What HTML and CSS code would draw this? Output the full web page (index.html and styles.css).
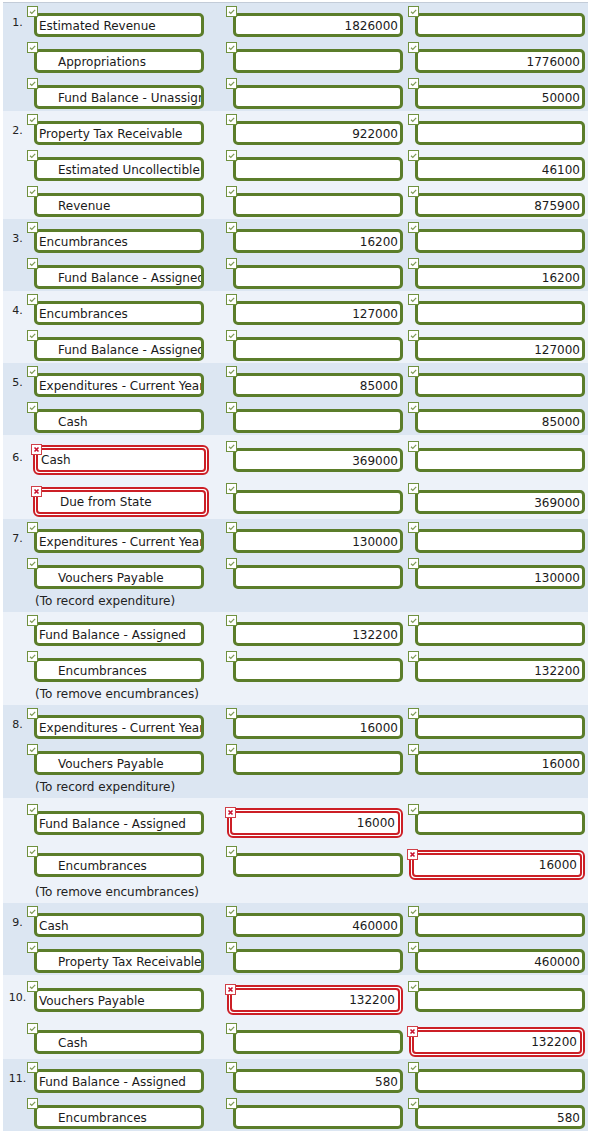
FILE: index.html
```html
<!DOCTYPE html>
<html>
<head>
<meta charset="utf-8">
<link rel="stylesheet" href="styles.css">
</head>
<body>
<div class="sheet">

<div class="grp a">
  <div class="row"><div class="num">1.</div>
    <div class="c1"><div class="fld"><svg class="chk" viewBox="0 0 11 11"><rect x=".5" y=".5" width="10" height="10" fill="#fff" stroke="#6f913f"/><path d="M3 5.8l1.8 1.7 3.4-3.6" fill="none" stroke="#7d9a55" stroke-width="1.2"/></svg><div class="box">Estimated Revenue</div></div></div>
    <div class="c2"><div class="fld"><svg class="chk" viewBox="0 0 11 11"><rect x=".5" y=".5" width="10" height="10" fill="#fff" stroke="#6f913f"/><path d="M3 5.8l1.8 1.7 3.4-3.6" fill="none" stroke="#7d9a55" stroke-width="1.2"/></svg><div class="box r">1826000</div></div></div>
    <div class="c3"><div class="fld"><svg class="chk" viewBox="0 0 11 11"><rect x=".5" y=".5" width="10" height="10" fill="#fff" stroke="#6f913f"/><path d="M3 5.8l1.8 1.7 3.4-3.6" fill="none" stroke="#7d9a55" stroke-width="1.2"/></svg><div class="box r"></div></div></div>
  </div>
  <div class="row"><div class="num"></div>
    <div class="c1"><div class="fld"><svg class="chk" viewBox="0 0 11 11"><rect x=".5" y=".5" width="10" height="10" fill="#fff" stroke="#6f913f"/><path d="M3 5.8l1.8 1.7 3.4-3.6" fill="none" stroke="#7d9a55" stroke-width="1.2"/></svg><div class="box ind">Appropriations</div></div></div>
    <div class="c2"><div class="fld"><svg class="chk" viewBox="0 0 11 11"><rect x=".5" y=".5" width="10" height="10" fill="#fff" stroke="#6f913f"/><path d="M3 5.8l1.8 1.7 3.4-3.6" fill="none" stroke="#7d9a55" stroke-width="1.2"/></svg><div class="box r"></div></div></div>
    <div class="c3"><div class="fld"><svg class="chk" viewBox="0 0 11 11"><rect x=".5" y=".5" width="10" height="10" fill="#fff" stroke="#6f913f"/><path d="M3 5.8l1.8 1.7 3.4-3.6" fill="none" stroke="#7d9a55" stroke-width="1.2"/></svg><div class="box r">1776000</div></div></div>
  </div>
  <div class="row"><div class="num"></div>
    <div class="c1"><div class="fld"><svg class="chk" viewBox="0 0 11 11"><rect x=".5" y=".5" width="10" height="10" fill="#fff" stroke="#6f913f"/><path d="M3 5.8l1.8 1.7 3.4-3.6" fill="none" stroke="#7d9a55" stroke-width="1.2"/></svg><div class="box ind">Fund Balance - Unassigned</div></div></div>
    <div class="c2"><div class="fld"><svg class="chk" viewBox="0 0 11 11"><rect x=".5" y=".5" width="10" height="10" fill="#fff" stroke="#6f913f"/><path d="M3 5.8l1.8 1.7 3.4-3.6" fill="none" stroke="#7d9a55" stroke-width="1.2"/></svg><div class="box r"></div></div></div>
    <div class="c3"><div class="fld"><svg class="chk" viewBox="0 0 11 11"><rect x=".5" y=".5" width="10" height="10" fill="#fff" stroke="#6f913f"/><path d="M3 5.8l1.8 1.7 3.4-3.6" fill="none" stroke="#7d9a55" stroke-width="1.2"/></svg><div class="box r">50000</div></div></div>
  </div>
</div>

<div class="grp b">
  <div class="row"><div class="num">2.</div>
    <div class="c1"><div class="fld"><svg class="chk" viewBox="0 0 11 11"><rect x=".5" y=".5" width="10" height="10" fill="#fff" stroke="#6f913f"/><path d="M3 5.8l1.8 1.7 3.4-3.6" fill="none" stroke="#7d9a55" stroke-width="1.2"/></svg><div class="box">Property Tax Receivable</div></div></div>
    <div class="c2"><div class="fld"><svg class="chk" viewBox="0 0 11 11"><rect x=".5" y=".5" width="10" height="10" fill="#fff" stroke="#6f913f"/><path d="M3 5.8l1.8 1.7 3.4-3.6" fill="none" stroke="#7d9a55" stroke-width="1.2"/></svg><div class="box r">922000</div></div></div>
    <div class="c3"><div class="fld"><svg class="chk" viewBox="0 0 11 11"><rect x=".5" y=".5" width="10" height="10" fill="#fff" stroke="#6f913f"/><path d="M3 5.8l1.8 1.7 3.4-3.6" fill="none" stroke="#7d9a55" stroke-width="1.2"/></svg><div class="box r"></div></div></div>
  </div>
  <div class="row"><div class="num"></div>
    <div class="c1"><div class="fld"><svg class="chk" viewBox="0 0 11 11"><rect x=".5" y=".5" width="10" height="10" fill="#fff" stroke="#6f913f"/><path d="M3 5.8l1.8 1.7 3.4-3.6" fill="none" stroke="#7d9a55" stroke-width="1.2"/></svg><div class="box ind">Estimated Uncollectible Taxes</div></div></div>
    <div class="c2"><div class="fld"><svg class="chk" viewBox="0 0 11 11"><rect x=".5" y=".5" width="10" height="10" fill="#fff" stroke="#6f913f"/><path d="M3 5.8l1.8 1.7 3.4-3.6" fill="none" stroke="#7d9a55" stroke-width="1.2"/></svg><div class="box r"></div></div></div>
    <div class="c3"><div class="fld"><svg class="chk" viewBox="0 0 11 11"><rect x=".5" y=".5" width="10" height="10" fill="#fff" stroke="#6f913f"/><path d="M3 5.8l1.8 1.7 3.4-3.6" fill="none" stroke="#7d9a55" stroke-width="1.2"/></svg><div class="box r">46100</div></div></div>
  </div>
  <div class="row"><div class="num"></div>
    <div class="c1"><div class="fld"><svg class="chk" viewBox="0 0 11 11"><rect x=".5" y=".5" width="10" height="10" fill="#fff" stroke="#6f913f"/><path d="M3 5.8l1.8 1.7 3.4-3.6" fill="none" stroke="#7d9a55" stroke-width="1.2"/></svg><div class="box ind">Revenue</div></div></div>
    <div class="c2"><div class="fld"><svg class="chk" viewBox="0 0 11 11"><rect x=".5" y=".5" width="10" height="10" fill="#fff" stroke="#6f913f"/><path d="M3 5.8l1.8 1.7 3.4-3.6" fill="none" stroke="#7d9a55" stroke-width="1.2"/></svg><div class="box r"></div></div></div>
    <div class="c3"><div class="fld"><svg class="chk" viewBox="0 0 11 11"><rect x=".5" y=".5" width="10" height="10" fill="#fff" stroke="#6f913f"/><path d="M3 5.8l1.8 1.7 3.4-3.6" fill="none" stroke="#7d9a55" stroke-width="1.2"/></svg><div class="box r">875900</div></div></div>
  </div>
</div>

<div class="grp a">
  <div class="row"><div class="num">3.</div>
    <div class="c1"><div class="fld"><svg class="chk" viewBox="0 0 11 11"><rect x=".5" y=".5" width="10" height="10" fill="#fff" stroke="#6f913f"/><path d="M3 5.8l1.8 1.7 3.4-3.6" fill="none" stroke="#7d9a55" stroke-width="1.2"/></svg><div class="box">Encumbrances</div></div></div>
    <div class="c2"><div class="fld"><svg class="chk" viewBox="0 0 11 11"><rect x=".5" y=".5" width="10" height="10" fill="#fff" stroke="#6f913f"/><path d="M3 5.8l1.8 1.7 3.4-3.6" fill="none" stroke="#7d9a55" stroke-width="1.2"/></svg><div class="box r">16200</div></div></div>
    <div class="c3"><div class="fld"><svg class="chk" viewBox="0 0 11 11"><rect x=".5" y=".5" width="10" height="10" fill="#fff" stroke="#6f913f"/><path d="M3 5.8l1.8 1.7 3.4-3.6" fill="none" stroke="#7d9a55" stroke-width="1.2"/></svg><div class="box r"></div></div></div>
  </div>
  <div class="row"><div class="num"></div>
    <div class="c1"><div class="fld"><svg class="chk" viewBox="0 0 11 11"><rect x=".5" y=".5" width="10" height="10" fill="#fff" stroke="#6f913f"/><path d="M3 5.8l1.8 1.7 3.4-3.6" fill="none" stroke="#7d9a55" stroke-width="1.2"/></svg><div class="box ind">Fund Balance - Assigned</div></div></div>
    <div class="c2"><div class="fld"><svg class="chk" viewBox="0 0 11 11"><rect x=".5" y=".5" width="10" height="10" fill="#fff" stroke="#6f913f"/><path d="M3 5.8l1.8 1.7 3.4-3.6" fill="none" stroke="#7d9a55" stroke-width="1.2"/></svg><div class="box r"></div></div></div>
    <div class="c3"><div class="fld"><svg class="chk" viewBox="0 0 11 11"><rect x=".5" y=".5" width="10" height="10" fill="#fff" stroke="#6f913f"/><path d="M3 5.8l1.8 1.7 3.4-3.6" fill="none" stroke="#7d9a55" stroke-width="1.2"/></svg><div class="box r">16200</div></div></div>
  </div>
</div>

<div class="grp b">
  <div class="row"><div class="num">4.</div>
    <div class="c1"><div class="fld"><svg class="chk" viewBox="0 0 11 11"><rect x=".5" y=".5" width="10" height="10" fill="#fff" stroke="#6f913f"/><path d="M3 5.8l1.8 1.7 3.4-3.6" fill="none" stroke="#7d9a55" stroke-width="1.2"/></svg><div class="box">Encumbrances</div></div></div>
    <div class="c2"><div class="fld"><svg class="chk" viewBox="0 0 11 11"><rect x=".5" y=".5" width="10" height="10" fill="#fff" stroke="#6f913f"/><path d="M3 5.8l1.8 1.7 3.4-3.6" fill="none" stroke="#7d9a55" stroke-width="1.2"/></svg><div class="box r">127000</div></div></div>
    <div class="c3"><div class="fld"><svg class="chk" viewBox="0 0 11 11"><rect x=".5" y=".5" width="10" height="10" fill="#fff" stroke="#6f913f"/><path d="M3 5.8l1.8 1.7 3.4-3.6" fill="none" stroke="#7d9a55" stroke-width="1.2"/></svg><div class="box r"></div></div></div>
  </div>
  <div class="row"><div class="num"></div>
    <div class="c1"><div class="fld"><svg class="chk" viewBox="0 0 11 11"><rect x=".5" y=".5" width="10" height="10" fill="#fff" stroke="#6f913f"/><path d="M3 5.8l1.8 1.7 3.4-3.6" fill="none" stroke="#7d9a55" stroke-width="1.2"/></svg><div class="box ind">Fund Balance - Assigned</div></div></div>
    <div class="c2"><div class="fld"><svg class="chk" viewBox="0 0 11 11"><rect x=".5" y=".5" width="10" height="10" fill="#fff" stroke="#6f913f"/><path d="M3 5.8l1.8 1.7 3.4-3.6" fill="none" stroke="#7d9a55" stroke-width="1.2"/></svg><div class="box r"></div></div></div>
    <div class="c3"><div class="fld"><svg class="chk" viewBox="0 0 11 11"><rect x=".5" y=".5" width="10" height="10" fill="#fff" stroke="#6f913f"/><path d="M3 5.8l1.8 1.7 3.4-3.6" fill="none" stroke="#7d9a55" stroke-width="1.2"/></svg><div class="box r">127000</div></div></div>
  </div>
</div>

<div class="grp a">
  <div class="row"><div class="num">5.</div>
    <div class="c1"><div class="fld"><svg class="chk" viewBox="0 0 11 11"><rect x=".5" y=".5" width="10" height="10" fill="#fff" stroke="#6f913f"/><path d="M3 5.8l1.8 1.7 3.4-3.6" fill="none" stroke="#7d9a55" stroke-width="1.2"/></svg><div class="box">Expenditures - Current Year</div></div></div>
    <div class="c2"><div class="fld"><svg class="chk" viewBox="0 0 11 11"><rect x=".5" y=".5" width="10" height="10" fill="#fff" stroke="#6f913f"/><path d="M3 5.8l1.8 1.7 3.4-3.6" fill="none" stroke="#7d9a55" stroke-width="1.2"/></svg><div class="box r">85000</div></div></div>
    <div class="c3"><div class="fld"><svg class="chk" viewBox="0 0 11 11"><rect x=".5" y=".5" width="10" height="10" fill="#fff" stroke="#6f913f"/><path d="M3 5.8l1.8 1.7 3.4-3.6" fill="none" stroke="#7d9a55" stroke-width="1.2"/></svg><div class="box r"></div></div></div>
  </div>
  <div class="row"><div class="num"></div>
    <div class="c1"><div class="fld"><svg class="chk" viewBox="0 0 11 11"><rect x=".5" y=".5" width="10" height="10" fill="#fff" stroke="#6f913f"/><path d="M3 5.8l1.8 1.7 3.4-3.6" fill="none" stroke="#7d9a55" stroke-width="1.2"/></svg><div class="box ind">Cash</div></div></div>
    <div class="c2"><div class="fld"><svg class="chk" viewBox="0 0 11 11"><rect x=".5" y=".5" width="10" height="10" fill="#fff" stroke="#6f913f"/><path d="M3 5.8l1.8 1.7 3.4-3.6" fill="none" stroke="#7d9a55" stroke-width="1.2"/></svg><div class="box r"></div></div></div>
    <div class="c3"><div class="fld"><svg class="chk" viewBox="0 0 11 11"><rect x=".5" y=".5" width="10" height="10" fill="#fff" stroke="#6f913f"/><path d="M3 5.8l1.8 1.7 3.4-3.6" fill="none" stroke="#7d9a55" stroke-width="1.2"/></svg><div class="box r">85000</div></div></div>
  </div>
</div>

<div class="grp b">
  <div class="row"><div class="num">6.</div>
    <div class="c1"><div class="fld bad"><svg class="chk" viewBox="0 0 11 11"><rect x=".5" y=".5" width="10" height="10" fill="#fff" stroke="#d04048"/><path d="M3.5 3.5l4 4m0-4l-4 4" stroke="#c8102e" stroke-width="1.6"/></svg><div class="box">Cash</div></div></div>
    <div class="c2"><div class="fld"><svg class="chk" viewBox="0 0 11 11"><rect x=".5" y=".5" width="10" height="10" fill="#fff" stroke="#6f913f"/><path d="M3 5.8l1.8 1.7 3.4-3.6" fill="none" stroke="#7d9a55" stroke-width="1.2"/></svg><div class="box r">369000</div></div></div>
    <div class="c3"><div class="fld"><svg class="chk" viewBox="0 0 11 11"><rect x=".5" y=".5" width="10" height="10" fill="#fff" stroke="#6f913f"/><path d="M3 5.8l1.8 1.7 3.4-3.6" fill="none" stroke="#7d9a55" stroke-width="1.2"/></svg><div class="box r"></div></div></div>
  </div>
  <div class="row"><div class="num"></div>
    <div class="c1"><div class="fld bad"><svg class="chk" viewBox="0 0 11 11"><rect x=".5" y=".5" width="10" height="10" fill="#fff" stroke="#d04048"/><path d="M3.5 3.5l4 4m0-4l-4 4" stroke="#c8102e" stroke-width="1.6"/></svg><div class="box ind">Due from State</div></div></div>
    <div class="c2"><div class="fld"><svg class="chk" viewBox="0 0 11 11"><rect x=".5" y=".5" width="10" height="10" fill="#fff" stroke="#6f913f"/><path d="M3 5.8l1.8 1.7 3.4-3.6" fill="none" stroke="#7d9a55" stroke-width="1.2"/></svg><div class="box r"></div></div></div>
    <div class="c3"><div class="fld"><svg class="chk" viewBox="0 0 11 11"><rect x=".5" y=".5" width="10" height="10" fill="#fff" stroke="#6f913f"/><path d="M3 5.8l1.8 1.7 3.4-3.6" fill="none" stroke="#7d9a55" stroke-width="1.2"/></svg><div class="box r">369000</div></div></div>
  </div>
</div>

<div class="grp a">
  <div class="row"><div class="num">7.</div>
    <div class="c1"><div class="fld"><svg class="chk" viewBox="0 0 11 11"><rect x=".5" y=".5" width="10" height="10" fill="#fff" stroke="#6f913f"/><path d="M3 5.8l1.8 1.7 3.4-3.6" fill="none" stroke="#7d9a55" stroke-width="1.2"/></svg><div class="box">Expenditures - Current Year</div></div></div>
    <div class="c2"><div class="fld"><svg class="chk" viewBox="0 0 11 11"><rect x=".5" y=".5" width="10" height="10" fill="#fff" stroke="#6f913f"/><path d="M3 5.8l1.8 1.7 3.4-3.6" fill="none" stroke="#7d9a55" stroke-width="1.2"/></svg><div class="box r">130000</div></div></div>
    <div class="c3"><div class="fld"><svg class="chk" viewBox="0 0 11 11"><rect x=".5" y=".5" width="10" height="10" fill="#fff" stroke="#6f913f"/><path d="M3 5.8l1.8 1.7 3.4-3.6" fill="none" stroke="#7d9a55" stroke-width="1.2"/></svg><div class="box r"></div></div></div>
  </div>
  <div class="row"><div class="num"></div>
    <div class="c1"><div class="fld"><svg class="chk" viewBox="0 0 11 11"><rect x=".5" y=".5" width="10" height="10" fill="#fff" stroke="#6f913f"/><path d="M3 5.8l1.8 1.7 3.4-3.6" fill="none" stroke="#7d9a55" stroke-width="1.2"/></svg><div class="box ind">Vouchers Payable</div></div></div>
    <div class="c2"><div class="fld"><svg class="chk" viewBox="0 0 11 11"><rect x=".5" y=".5" width="10" height="10" fill="#fff" stroke="#6f913f"/><path d="M3 5.8l1.8 1.7 3.4-3.6" fill="none" stroke="#7d9a55" stroke-width="1.2"/></svg><div class="box r"></div></div></div>
    <div class="c3"><div class="fld"><svg class="chk" viewBox="0 0 11 11"><rect x=".5" y=".5" width="10" height="10" fill="#fff" stroke="#6f913f"/><path d="M3 5.8l1.8 1.7 3.4-3.6" fill="none" stroke="#7d9a55" stroke-width="1.2"/></svg><div class="box r">130000</div></div></div>
  </div>
  <div class="note">(To record expenditure)</div>
</div>

<div class="grp b">
  <div class="row"><div class="num"></div>
    <div class="c1"><div class="fld"><svg class="chk" viewBox="0 0 11 11"><rect x=".5" y=".5" width="10" height="10" fill="#fff" stroke="#6f913f"/><path d="M3 5.8l1.8 1.7 3.4-3.6" fill="none" stroke="#7d9a55" stroke-width="1.2"/></svg><div class="box">Fund Balance - Assigned</div></div></div>
    <div class="c2"><div class="fld"><svg class="chk" viewBox="0 0 11 11"><rect x=".5" y=".5" width="10" height="10" fill="#fff" stroke="#6f913f"/><path d="M3 5.8l1.8 1.7 3.4-3.6" fill="none" stroke="#7d9a55" stroke-width="1.2"/></svg><div class="box r">132200</div></div></div>
    <div class="c3"><div class="fld"><svg class="chk" viewBox="0 0 11 11"><rect x=".5" y=".5" width="10" height="10" fill="#fff" stroke="#6f913f"/><path d="M3 5.8l1.8 1.7 3.4-3.6" fill="none" stroke="#7d9a55" stroke-width="1.2"/></svg><div class="box r"></div></div></div>
  </div>
  <div class="row"><div class="num"></div>
    <div class="c1"><div class="fld"><svg class="chk" viewBox="0 0 11 11"><rect x=".5" y=".5" width="10" height="10" fill="#fff" stroke="#6f913f"/><path d="M3 5.8l1.8 1.7 3.4-3.6" fill="none" stroke="#7d9a55" stroke-width="1.2"/></svg><div class="box ind">Encumbrances</div></div></div>
    <div class="c2"><div class="fld"><svg class="chk" viewBox="0 0 11 11"><rect x=".5" y=".5" width="10" height="10" fill="#fff" stroke="#6f913f"/><path d="M3 5.8l1.8 1.7 3.4-3.6" fill="none" stroke="#7d9a55" stroke-width="1.2"/></svg><div class="box r"></div></div></div>
    <div class="c3"><div class="fld"><svg class="chk" viewBox="0 0 11 11"><rect x=".5" y=".5" width="10" height="10" fill="#fff" stroke="#6f913f"/><path d="M3 5.8l1.8 1.7 3.4-3.6" fill="none" stroke="#7d9a55" stroke-width="1.2"/></svg><div class="box r">132200</div></div></div>
  </div>
  <div class="note">(To remove encumbrances)</div>
</div>

<div class="grp a">
  <div class="row"><div class="num">8.</div>
    <div class="c1"><div class="fld"><svg class="chk" viewBox="0 0 11 11"><rect x=".5" y=".5" width="10" height="10" fill="#fff" stroke="#6f913f"/><path d="M3 5.8l1.8 1.7 3.4-3.6" fill="none" stroke="#7d9a55" stroke-width="1.2"/></svg><div class="box">Expenditures - Current Year</div></div></div>
    <div class="c2"><div class="fld"><svg class="chk" viewBox="0 0 11 11"><rect x=".5" y=".5" width="10" height="10" fill="#fff" stroke="#6f913f"/><path d="M3 5.8l1.8 1.7 3.4-3.6" fill="none" stroke="#7d9a55" stroke-width="1.2"/></svg><div class="box r">16000</div></div></div>
    <div class="c3"><div class="fld"><svg class="chk" viewBox="0 0 11 11"><rect x=".5" y=".5" width="10" height="10" fill="#fff" stroke="#6f913f"/><path d="M3 5.8l1.8 1.7 3.4-3.6" fill="none" stroke="#7d9a55" stroke-width="1.2"/></svg><div class="box r"></div></div></div>
  </div>
  <div class="row"><div class="num"></div>
    <div class="c1"><div class="fld"><svg class="chk" viewBox="0 0 11 11"><rect x=".5" y=".5" width="10" height="10" fill="#fff" stroke="#6f913f"/><path d="M3 5.8l1.8 1.7 3.4-3.6" fill="none" stroke="#7d9a55" stroke-width="1.2"/></svg><div class="box ind">Vouchers Payable</div></div></div>
    <div class="c2"><div class="fld"><svg class="chk" viewBox="0 0 11 11"><rect x=".5" y=".5" width="10" height="10" fill="#fff" stroke="#6f913f"/><path d="M3 5.8l1.8 1.7 3.4-3.6" fill="none" stroke="#7d9a55" stroke-width="1.2"/></svg><div class="box r"></div></div></div>
    <div class="c3"><div class="fld"><svg class="chk" viewBox="0 0 11 11"><rect x=".5" y=".5" width="10" height="10" fill="#fff" stroke="#6f913f"/><path d="M3 5.8l1.8 1.7 3.4-3.6" fill="none" stroke="#7d9a55" stroke-width="1.2"/></svg><div class="box r">16000</div></div></div>
  </div>
  <div class="note">(To record expenditure)</div>
</div>

<div class="grp b">
  <div class="row"><div class="num"></div>
    <div class="c1"><div class="fld"><svg class="chk" viewBox="0 0 11 11"><rect x=".5" y=".5" width="10" height="10" fill="#fff" stroke="#6f913f"/><path d="M3 5.8l1.8 1.7 3.4-3.6" fill="none" stroke="#7d9a55" stroke-width="1.2"/></svg><div class="box">Fund Balance - Assigned</div></div></div>
    <div class="c2"><div class="fld bad"><svg class="chk" viewBox="0 0 11 11"><rect x=".5" y=".5" width="10" height="10" fill="#fff" stroke="#d04048"/><path d="M3.5 3.5l4 4m0-4l-4 4" stroke="#c8102e" stroke-width="1.6"/></svg><div class="box r">16000</div></div></div>
    <div class="c3"><div class="fld"><svg class="chk" viewBox="0 0 11 11"><rect x=".5" y=".5" width="10" height="10" fill="#fff" stroke="#6f913f"/><path d="M3 5.8l1.8 1.7 3.4-3.6" fill="none" stroke="#7d9a55" stroke-width="1.2"/></svg><div class="box r"></div></div></div>
  </div>
  <div class="row"><div class="num"></div>
    <div class="c1"><div class="fld"><svg class="chk" viewBox="0 0 11 11"><rect x=".5" y=".5" width="10" height="10" fill="#fff" stroke="#6f913f"/><path d="M3 5.8l1.8 1.7 3.4-3.6" fill="none" stroke="#7d9a55" stroke-width="1.2"/></svg><div class="box ind">Encumbrances</div></div></div>
    <div class="c2"><div class="fld"><svg class="chk" viewBox="0 0 11 11"><rect x=".5" y=".5" width="10" height="10" fill="#fff" stroke="#6f913f"/><path d="M3 5.8l1.8 1.7 3.4-3.6" fill="none" stroke="#7d9a55" stroke-width="1.2"/></svg><div class="box r"></div></div></div>
    <div class="c3"><div class="fld bad"><svg class="chk" viewBox="0 0 11 11"><rect x=".5" y=".5" width="10" height="10" fill="#fff" stroke="#d04048"/><path d="M3.5 3.5l4 4m0-4l-4 4" stroke="#c8102e" stroke-width="1.6"/></svg><div class="box r">16000</div></div></div>
  </div>
  <div class="note">(To remove encumbrances)</div>
</div>

<div class="grp a">
  <div class="row"><div class="num">9.</div>
    <div class="c1"><div class="fld"><svg class="chk" viewBox="0 0 11 11"><rect x=".5" y=".5" width="10" height="10" fill="#fff" stroke="#6f913f"/><path d="M3 5.8l1.8 1.7 3.4-3.6" fill="none" stroke="#7d9a55" stroke-width="1.2"/></svg><div class="box">Cash</div></div></div>
    <div class="c2"><div class="fld"><svg class="chk" viewBox="0 0 11 11"><rect x=".5" y=".5" width="10" height="10" fill="#fff" stroke="#6f913f"/><path d="M3 5.8l1.8 1.7 3.4-3.6" fill="none" stroke="#7d9a55" stroke-width="1.2"/></svg><div class="box r">460000</div></div></div>
    <div class="c3"><div class="fld"><svg class="chk" viewBox="0 0 11 11"><rect x=".5" y=".5" width="10" height="10" fill="#fff" stroke="#6f913f"/><path d="M3 5.8l1.8 1.7 3.4-3.6" fill="none" stroke="#7d9a55" stroke-width="1.2"/></svg><div class="box r"></div></div></div>
  </div>
  <div class="row"><div class="num"></div>
    <div class="c1"><div class="fld"><svg class="chk" viewBox="0 0 11 11"><rect x=".5" y=".5" width="10" height="10" fill="#fff" stroke="#6f913f"/><path d="M3 5.8l1.8 1.7 3.4-3.6" fill="none" stroke="#7d9a55" stroke-width="1.2"/></svg><div class="box ind">Property Tax Receivable</div></div></div>
    <div class="c2"><div class="fld"><svg class="chk" viewBox="0 0 11 11"><rect x=".5" y=".5" width="10" height="10" fill="#fff" stroke="#6f913f"/><path d="M3 5.8l1.8 1.7 3.4-3.6" fill="none" stroke="#7d9a55" stroke-width="1.2"/></svg><div class="box r"></div></div></div>
    <div class="c3"><div class="fld"><svg class="chk" viewBox="0 0 11 11"><rect x=".5" y=".5" width="10" height="10" fill="#fff" stroke="#6f913f"/><path d="M3 5.8l1.8 1.7 3.4-3.6" fill="none" stroke="#7d9a55" stroke-width="1.2"/></svg><div class="box r">460000</div></div></div>
  </div>
</div>

<div class="grp b">
  <div class="row"><div class="num">10.</div>
    <div class="c1"><div class="fld"><svg class="chk" viewBox="0 0 11 11"><rect x=".5" y=".5" width="10" height="10" fill="#fff" stroke="#6f913f"/><path d="M3 5.8l1.8 1.7 3.4-3.6" fill="none" stroke="#7d9a55" stroke-width="1.2"/></svg><div class="box">Vouchers Payable</div></div></div>
    <div class="c2"><div class="fld bad"><svg class="chk" viewBox="0 0 11 11"><rect x=".5" y=".5" width="10" height="10" fill="#fff" stroke="#d04048"/><path d="M3.5 3.5l4 4m0-4l-4 4" stroke="#c8102e" stroke-width="1.6"/></svg><div class="box r">132200</div></div></div>
    <div class="c3"><div class="fld"><svg class="chk" viewBox="0 0 11 11"><rect x=".5" y=".5" width="10" height="10" fill="#fff" stroke="#6f913f"/><path d="M3 5.8l1.8 1.7 3.4-3.6" fill="none" stroke="#7d9a55" stroke-width="1.2"/></svg><div class="box r"></div></div></div>
  </div>
  <div class="row"><div class="num"></div>
    <div class="c1"><div class="fld"><svg class="chk" viewBox="0 0 11 11"><rect x=".5" y=".5" width="10" height="10" fill="#fff" stroke="#6f913f"/><path d="M3 5.8l1.8 1.7 3.4-3.6" fill="none" stroke="#7d9a55" stroke-width="1.2"/></svg><div class="box ind">Cash</div></div></div>
    <div class="c2"><div class="fld"><svg class="chk" viewBox="0 0 11 11"><rect x=".5" y=".5" width="10" height="10" fill="#fff" stroke="#6f913f"/><path d="M3 5.8l1.8 1.7 3.4-3.6" fill="none" stroke="#7d9a55" stroke-width="1.2"/></svg><div class="box r"></div></div></div>
    <div class="c3"><div class="fld bad"><svg class="chk" viewBox="0 0 11 11"><rect x=".5" y=".5" width="10" height="10" fill="#fff" stroke="#d04048"/><path d="M3.5 3.5l4 4m0-4l-4 4" stroke="#c8102e" stroke-width="1.6"/></svg><div class="box r">132200</div></div></div>
  </div>
</div>

<div class="grp a">
  <div class="row"><div class="num">11.</div>
    <div class="c1"><div class="fld"><svg class="chk" viewBox="0 0 11 11"><rect x=".5" y=".5" width="10" height="10" fill="#fff" stroke="#6f913f"/><path d="M3 5.8l1.8 1.7 3.4-3.6" fill="none" stroke="#7d9a55" stroke-width="1.2"/></svg><div class="box">Fund Balance - Assigned</div></div></div>
    <div class="c2"><div class="fld"><svg class="chk" viewBox="0 0 11 11"><rect x=".5" y=".5" width="10" height="10" fill="#fff" stroke="#6f913f"/><path d="M3 5.8l1.8 1.7 3.4-3.6" fill="none" stroke="#7d9a55" stroke-width="1.2"/></svg><div class="box r">580</div></div></div>
    <div class="c3"><div class="fld"><svg class="chk" viewBox="0 0 11 11"><rect x=".5" y=".5" width="10" height="10" fill="#fff" stroke="#6f913f"/><path d="M3 5.8l1.8 1.7 3.4-3.6" fill="none" stroke="#7d9a55" stroke-width="1.2"/></svg><div class="box r"></div></div></div>
  </div>
  <div class="row"><div class="num"></div>
    <div class="c1"><div class="fld"><svg class="chk" viewBox="0 0 11 11"><rect x=".5" y=".5" width="10" height="10" fill="#fff" stroke="#6f913f"/><path d="M3 5.8l1.8 1.7 3.4-3.6" fill="none" stroke="#7d9a55" stroke-width="1.2"/></svg><div class="box ind">Encumbrances</div></div></div>
    <div class="c2"><div class="fld"><svg class="chk" viewBox="0 0 11 11"><rect x=".5" y=".5" width="10" height="10" fill="#fff" stroke="#6f913f"/><path d="M3 5.8l1.8 1.7 3.4-3.6" fill="none" stroke="#7d9a55" stroke-width="1.2"/></svg><div class="box r"></div></div></div>
    <div class="c3"><div class="fld"><svg class="chk" viewBox="0 0 11 11"><rect x=".5" y=".5" width="10" height="10" fill="#fff" stroke="#6f913f"/><path d="M3 5.8l1.8 1.7 3.4-3.6" fill="none" stroke="#7d9a55" stroke-width="1.2"/></svg><div class="box r">580</div></div></div>
  </div>
</div>

</div>
</body>
</html>
```
FILE: styles.css
```css
body {
  margin: 0;
  background: #fff;
  font-family: "DejaVu Sans", Verdana, sans-serif;
  color: #1a1a1a;
}

.sheet {
  margin: 2px 0 0 3px;
  width: 585px;
  border-top: 1px solid #c3ccd8;
}

.grp.a { background: #dce6f2; }
.grp.b { background: #edf2f9; }

.row {
  display: flex;
  align-items: center;
  padding: 10px 0 2px;
}

.num {
  width: 29px;
  margin-bottom: 6px;
  text-align: center;
  font-size: 11px;
  line-height: 13px;
  color: #222;
}

.c1, .c2, .c3 {
  width: 176px;
  display: flex;
}
.c1 { margin-left: 1px; justify-content: flex-start; }
.c2 { margin-left: 18px; justify-content: flex-end; }
.c3 { margin-left: 6px; justify-content: flex-end; }

.c1 > .fld:not(.bad) { margin-left: 1px; }

.fld {
  position: relative;
  display: flex;
}

.chk {
  position: absolute;
  left: -7px;
  top: -7px;
  width: 11px;
  height: 11px;
  z-index: 1;
}

.box {
  width: 170px;
  height: 24px;
  box-sizing: border-box;
  border: 3px solid #5b7d2a;
  border-radius: 5px;
  background: #fff;
  padding: 0 2px;
  font-size: 12px;
  line-height: 20px;
  white-space: nowrap;
  overflow: hidden;
  color: #1a1a1a;
}

.box.ind { padding-left: 21px; }
.box.r { text-align: right; }

.fld.bad {
  border: 2px solid #cc1f26;
  border-radius: 6px;
  padding: 1px;
  background: #fff;
}
.fld.bad .box {
  border: 2px solid #cc1f26;
  border-radius: 4px;
  padding: 0 3px;
  line-height: 21px;
}
.fld.bad .box.ind { padding-left: 22px; }
.fld.bad .chk {
  left: -4px;
  top: -3px;
}

.note {
  height: 21px;
  line-height: 21px;
  padding-left: 32px;
  font-size: 12px;
  color: #222;
}
```
